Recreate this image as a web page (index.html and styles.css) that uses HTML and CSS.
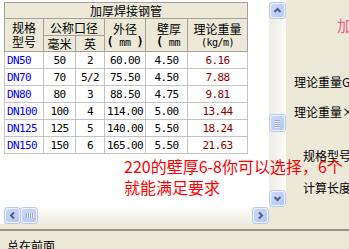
FILE: index.html
```html
<!DOCTYPE html>
<html>
<head>
<meta charset="utf-8">
<link rel="stylesheet" href="styles.css">
</head>
<body>
<div class="top">
  <div class="panel">
    <div class="content">
      <div class="thead">
        <div class="c title">加厚焊接钢管</div>
        <div class="c r23"><span>规格</span><span>型号</span></div>
        <div class="c span2">公称口径</div>
        <div class="c r23"><span>外径</span><span class="unit"><b>(</b> mm <b>)</b></span></div>
        <div class="c r23 left"><span>壁厚</span><span class="unit"><b>(</b> mm <b>)</b></span></div>
        <div class="c r23"><span>理论重量</span><span class="kg">(kg/m)</span></div>
        <div class="c">毫米</div>
        <div class="c">英</div>
      </div>
      <div class="tbody">
        <div class="d dn">DN50</div><div class="d">50</div><div class="d">2</div><div class="d">60.00</div><div class="d">4.50</div><div class="d wt">6.16</div>
        <div class="d dn">DN70</div><div class="d">70</div><div class="d">5/2</div><div class="d">75.50</div><div class="d">4.50</div><div class="d wt">7.88</div>
        <div class="d dn">DN80</div><div class="d">80</div><div class="d">3</div><div class="d">88.50</div><div class="d">4.75</div><div class="d wt">9.81</div>
        <div class="d dn">DN100</div><div class="d">100</div><div class="d">4</div><div class="d">114.00</div><div class="d">5.00</div><div class="d wt">13.44</div>
        <div class="d dn">DN125</div><div class="d">125</div><div class="d">5</div><div class="d">140.00</div><div class="d">5.50</div><div class="d wt">18.24</div>
        <div class="d dn">DN150</div><div class="d">150</div><div class="d">6</div><div class="d">165.00</div><div class="d">5.50</div><div class="d wt">21.63</div>
      </div>
    </div>
    <div class="vscroll">
      <div class="btn"><div class="face"><svg width="13" height="13" viewBox="0 0 13 13"><polyline points="3.5,8 6.5,5 9.5,8" fill="none" stroke="#4d6185" stroke-width="2"/></svg></div></div>
      <div class="vthumb"><svg width="13" height="14" viewBox="0 0 13 14"><path d="M4 4.5h5M4 6.5h5M4 8.5h5M4 10.5h5" stroke="#8ea6e0" stroke-width="1"/><path d="M4 5.5h5M4 7.5h5M4 9.5h5M4 11.5h5" stroke="#eef3fe" stroke-width="1"/></svg></div>
      <div class="btn down"><div class="face"><svg width="13" height="13" viewBox="0 0 13 13"><polyline points="3.5,5 6.5,8 9.5,5" fill="none" stroke="#4d6185" stroke-width="2"/></svg></div></div>
    </div>
    <div class="hscroll">
      <div class="btn"><div class="face"><svg width="13" height="13" viewBox="0 0 13 13"><polyline points="8,3.5 5,6.5 8,9.5" fill="none" stroke="#4d6185" stroke-width="2"/></svg></div></div>
      <div class="hthumb"><svg width="14" height="13" viewBox="0 0 14 13"><path d="M4.5 4v5M6.5 4v5M8.5 4v5M10.5 4v5" stroke="#8ea6e0" stroke-width="1"/><path d="M5.5 4v5M7.5 4v5M9.5 4v5M11.5 4v5" stroke="#eef3fe" stroke-width="1"/></svg></div>
      <div class="btn right"><div class="face"><svg width="13" height="13" viewBox="0 0 13 13"><polyline points="5,3.5 8,6.5 5,9.5" fill="none" stroke="#4d6185" stroke-width="2"/></svg></div></div>
    </div>
    <div class="corner"></div>
  </div>
  <div class="side">
    <div class="jia">加</div>
    <div class="lbl l1">理论重量G</div>
    <div class="lbl l2">理论重量×</div>
    <div class="lbl l3">规格型号</div>
    <div class="lbl l4">计算长度</div>
  </div>
</div>
<div class="bottom">总在前面</div>
<div class="note">220的壁厚6-8你可以选择，6个<br>就能满足要求</div>
</body>
</html>
```
FILE: styles.css
```css
* { box-sizing: border-box; margin: 0; padding: 0; }
body {
  margin: 0;
  width: 349px;
  height: 249px;
  overflow: hidden;
  position: relative;
  background: #ece9d8;
  font-family: "Noto Sans CJK SC", sans-serif;
  font-size: 12px;
  color: #000;
}
.top { display: flex; height: 224px; }
.panel {
  width: 286px;
  flex: none;
  display: grid;
  grid-template-columns: 269px 17px;
  grid-template-rows: 205px 17px;
  padding-top: 2px;
  background: #fff;
}
.content { padding-left: 4px; overflow: hidden; background: #fff; }
.thead, .tbody {
  display: grid;
  grid-template-columns: 38px 31px 28px 40px 41px 59px;
  gap: 1px;
  width: 244px;
}
.thead {
  grid-template-rows: 15px 16px 15px;
  padding: 1px;
  background: #a3a19a;
}
.thead .c {
  background: #ece9d8;
  display: flex;
  align-items: center;
  justify-content: center;
  text-align: center;
  line-height: 13px;
  overflow: hidden;
  white-space: nowrap;
}
.thead .title { grid-column: 1 / -1; }
.thead .r23 {
  grid-row: span 2;
  flex-direction: column;
  line-height: 14px;
}
.thead .r23 span { display: block; }
.thead .span2 { grid-column: span 2; }
.thead .left { align-items: flex-start; padding-left: 11px; }
.thead .left .unit { margin-left: -1px; }
.unit {
  font-family: "DejaVu Sans Mono", monospace;
  font-size: 10px;
  line-height: 13px;
  letter-spacing: -0.3px;
}
.unit b { font-size: 12px; font-weight: bold; }
.kg {
  font-family: "DejaVu Sans Mono", monospace;
  font-size: 10px;
  letter-spacing: -0.5px;
  line-height: 13px;
}
.tbody {
  grid-auto-rows: 16px;
  padding: 0 1px 1px;
  background: #c4c4c4;
}
.tbody .d {
  background: #fff;
  font-family: "DejaVu Sans Mono", monospace;
  font-size: 11px;
  letter-spacing: -0.6px;
  display: flex;
  align-items: center;
  justify-content: center;
  white-space: nowrap;
}
.tbody .dn { justify-content: flex-start; padding-left: 2px; color: #0000ff; }
.tbody .wt { color: #8c0000; }

.vscroll {
  grid-column: 2;
  grid-row: 1;
  display: flex;
  flex-direction: column;
  background: linear-gradient(to right, #edebe3, #fdfdfa);
}
.hscroll {
  grid-column: 1;
  grid-row: 2;
  margin-left: 4px;
  display: flex;
  background: linear-gradient(#fdfdfa, #edebe3);
}
.corner { grid-column: 2; grid-row: 2; background: #ece9d8; }
.btn { width: 17px; height: 17px; padding: 1px; flex: none; }
.btn.down { margin-top: auto; }
.btn.right { margin-left: auto; }
.face, .vthumb, .hthumb {
  border: 1px solid #eef2fd;
  border-radius: 3px;
  background: linear-gradient(135deg, #cbd9fc, #b4c7f4);
  box-shadow: 0 0 0 1px #b9c9ec;
  display: flex;
  align-items: center;
  justify-content: center;
}
.face { width: 15px; height: 15px; }
.vthumb { width: 15px; height: 16px; margin: 96px 0 0 1px; flex: none; }
.hthumb { width: 16px; height: 15px; margin: 1px 0 0 0; flex: none; }

.side {
  flex: 1;
  overflow: hidden;
  white-space: nowrap;
  padding-top: 15px;
}
.jia {
  color: #f2628c;
  font-size: 16px;
  line-height: 20px;
  margin-left: 51px;
}
.lbl { line-height: 14px; margin-left: 8px; }
.l1 { margin-top: 40px; }
.l2 { margin-top: 16px; }
.l3 { margin-top: 30px; margin-left: 17px; }
.l4 { margin-top: 18px; margin-left: 17px; }

.bottom {
  margin-top: 5px;
  border-top: 2px solid #94918a;
  padding: 8px 0 0 7px;
  line-height: 14px;
  white-space: nowrap;
}
.note {
  position: absolute;
  left: 124px;
  top: 156px;
  color: #ff0000;
  font-size: 16px;
  line-height: 21px;
  white-space: nowrap;
}
```
